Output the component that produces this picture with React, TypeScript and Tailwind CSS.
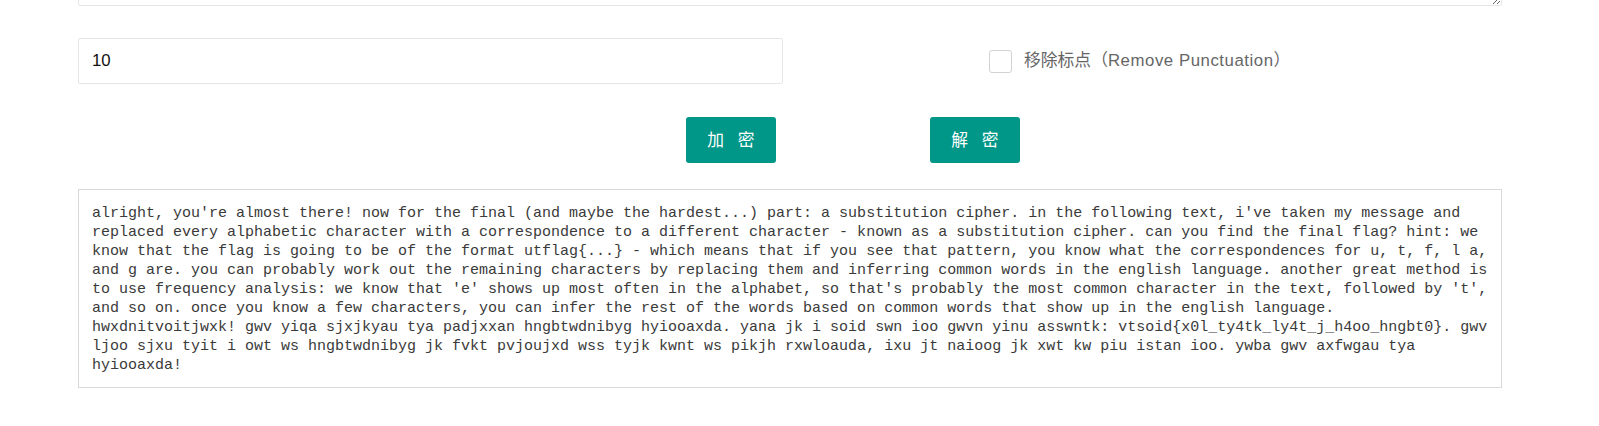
import React from "react";

const ORIGINAL = `alright, you're almost there! now for the final (and maybe the hardest...) part: a substitution cipher. in the following text, i've taken my message and replaced every alphabetic character with a correspondence to a different character - known as a substitution cipher. can you find the final flag? hint: we know that the flag is going to be of the format utflag{...} - which means that if you see that pattern, you know what the correspondences for u, t, f, l a, and g are. you can probably work out the remaining characters by replacing them and inferring common words in the english language. another great method is to use frequency analysis: we know that 'e' shows up most often in the alphabet, so that's probably the most common character in the text, followed by 't', and so on. once you know a few characters, you can infer the rest of the words based on common words that show up in the english language.
hwxdnitvoitjwxk! gwv yiqa sjxjkyau tya padjxxan hngbtwdnibyg hyiooaxda. yana jk i soid swn ioo gwvn yinu asswntk: vtsoid{x0l_ty4tk_ly4t_j_h4oo_hngbt0}. gwv ljoo sjxu tyit i owt ws hngbtwdnibyg jk fvkt pvjoujxd wss tyjk kwnt ws pikjh rxwloauda, ixu jt naioog jk xwt kw piu istan ioo. ywba gwv axfwgau tya hyiooaxda!`;

export default function App() {
  const sans = { fontFamily: '"Liberation Sans", "Noto Sans CJK SC", Arial, sans-serif' };
  const cjk = { fontFamily: '"Noto Sans CJK SC", "Liberation Sans", sans-serif' };
  return (
    <div className="w-[1599px] h-[426px] bg-white overflow-hidden">
      <div className="ml-[78px] w-[1424px]">
        <div className="h-[6px] overflow-hidden flex flex-col justify-end">
          <textarea
            readOnly
            className="shrink-0 block h-[120px] w-full border border-[#e6e6e6] rounded-[2px] bg-white outline-none"
          />
        </div>

        <div className="mt-[32px] flex items-center h-[46px]">
          <input
            readOnly
            value="10"
            className="w-[705px] h-[46px] border border-[#e6e6e6] rounded-[2px] px-[13px] text-[16.8px] text-[#111] outline-none bg-white"
            style={sans}
          />
          <label className="ml-[206px] flex items-center">
            <span className="block w-[23px] h-[23px] border border-[#d2d2d2] rounded-[3px] bg-white" />
            <span className="ml-[12px] text-[16.8px] text-[#666] leading-none" style={sans}>
              移除标点（<span className="tracking-[0.55px]">Remove Punctuation</span>）
            </span>
          </label>
        </div>

        <div className="mt-[33px] flex">
          <button
            className="ml-[608px] w-[90px] h-[46px] bg-[#009688] rounded-[3px] text-white text-[16.8px] tracking-[5px] pl-[5px] flex items-center justify-center"
            style={cjk}
          >
            加 密
          </button>
          <button
            className="ml-[154px] w-[90px] h-[46px] bg-[#009688] rounded-[3px] text-white text-[16.8px] tracking-[5px] pl-[5px] flex items-center justify-center"
            style={cjk}
          >
            解 密
          </button>
        </div>

        <div
          className="mt-[26px] w-full h-[199px] border border-[#d9d9d9] pt-[14px] pb-[10px] px-[13px] text-[15px] leading-[19px] text-[#3a3a3a] whitespace-pre-wrap break-words overflow-hidden"
          style={{ fontFamily: '"Liberation Mono", "Courier New", monospace' }}
        >
          {ORIGINAL}
        </div>
      </div>
    </div>
  );
}
